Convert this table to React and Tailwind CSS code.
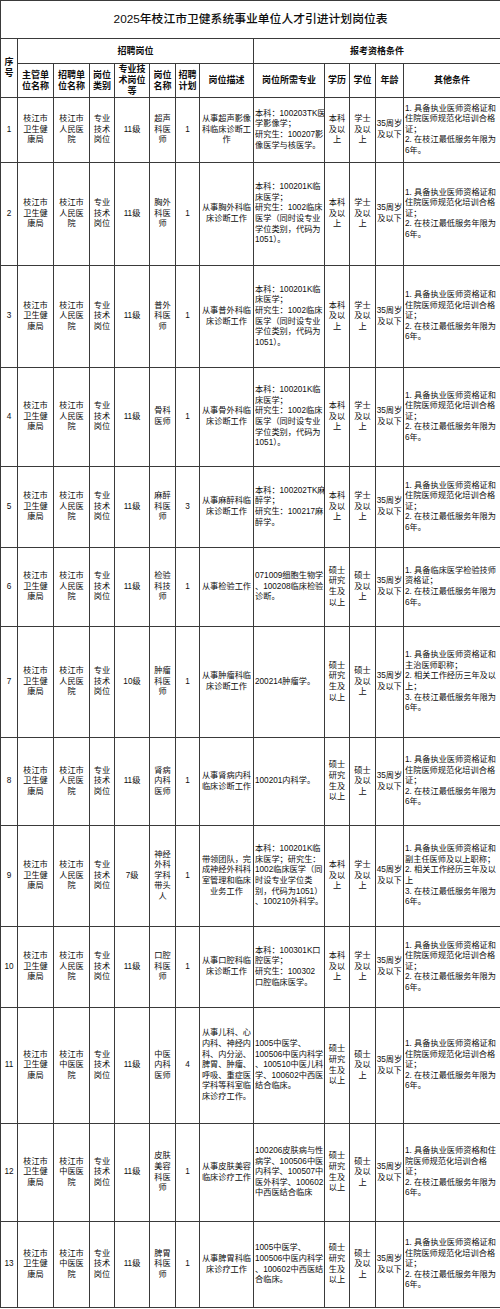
import React from "react";

const A = "枝江市\n卫生健\n康局";
const RM = "枝江市\n人民医\n院";
const ZY = "枝江市\n中医医\n院";
const T = "专业\n技术\n岗位";
const BK = "本科\n及以\n上";
const XS = "学士\n及以\n上";
const SS = "硕士\n研究\n生及\n以上";
const SX = "硕士\n及以\n上";
const AGE = "35周岁\n及以下";
const STD = "1. 具备执业医师资格证和\n住院医师规范化培训合格\n证；\n2. 在枝江最低服务年限为\n6年。";
const LC = "本科：100201K临\n床医学；\n研究生：1002临床\n医学（同时设专业\n学位类别，代码为\n1051）。";

const rows = [
  { h: "h-[65px]", n: "1", b: RM, lv: "11级", name: "超声\n科医\n师", plan: "1", desc: "从事超声影像\n科临床诊断工\n作", major: "本科：100203TK医\n学影像学；\n研究生：100207影\n像医学与核医学。", edu: BK, deg: XS, age: AGE, other: STD },
  { h: "h-[103px]", n: "2", b: RM, lv: "11级", name: "胸外\n科医\n师", plan: "1", desc: "从事胸外科临\n床诊断工作", major: LC, edu: BK, deg: XS, age: AGE, other: STD },
  { h: "h-[102px]", n: "3", b: RM, lv: "11级", name: "普外\n科医\n师", plan: "1", desc: "从事普外科临\n床诊断工作", major: LC, edu: BK, deg: XS, age: AGE, other: STD },
  { h: "h-[99px]", n: "4", b: RM, lv: "11级", name: "骨科\n医师", plan: "1", desc: "从事骨外科临\n床诊断工作", major: LC, edu: BK, deg: XS, age: AGE, other: STD },
  { h: "h-[81px]", n: "5", b: RM, lv: "11级", name: "麻醉\n科医\n师", plan: "3", desc: "从事麻醉科临\n床诊断工作", major: "本科：100202TK麻\n醉学；\n研究生：100217麻\n醉学。", edu: BK, deg: XS, age: AGE, other: STD },
  { h: "h-[79px]", n: "6", b: RM, lv: "11级", name: "检验\n科技\n师", plan: "1", desc: "从事检验工作", major: "071009细胞生物学\n、100208临床检验\n诊断。", edu: SS, deg: SX, age: AGE, other: "1. 具备临床医学检验技师\n资格证；\n2. 在枝江最低服务年限为\n6年。" },
  { h: "h-[111px]", n: "7", b: RM, lv: "10级", name: "肿瘤\n科医\n师", plan: "1", desc: "从事肿瘤科临\n床诊断工作", major: "200214肿瘤学。", edu: SS, deg: SX, age: AGE, other: "1. 具备执业医师资格证和\n主治医师职称；\n2. 相关工作经历三年及以\n上；\n3. 在枝江最低服务年限为\n6年。" },
  { h: "h-[88px]", n: "8", b: RM, lv: "11级", name: "肾病\n内科\n医师", plan: "1", desc: "从事肾病内科\n临床诊断工作", major: "100201内科学。", edu: SS, deg: SX, age: AGE, other: STD },
  { h: "h-[101px]", n: "9", b: RM, lv: "7级", name: "神经\n外科\n学科\n带头\n人", plan: "1", desc: "带领团队，完\n成神经外科科\n室管理和临床\n业务工作", major: "本科：100201K临\n床医学；研究生：\n1002临床医学（同\n时设专业学位类\n别，代码为1051）\n、100210外科学。", edu: BK, deg: XS, age: "45周岁\n及以下", other: "1. 具备执业医师资格证和\n副主任医师及以上职称；\n2. 相关工作经历三年及以\n上\n3. 在枝江最低服务年限为\n6年。" },
  { h: "h-[81px]", n: "10", b: RM, lv: "11级", name: "口腔\n科医\n师", plan: "1", desc: "从事口腔科临\n床诊断工作", major: "本科：100301K口\n腔医学；\n研究生：100302\n口腔临床医学。", edu: BK, deg: XS, age: AGE, other: STD },
  { h: "h-[116px]", n: "11", b: ZY, lv: "11级", name: "中医\n内科\n医师", plan: "4", desc: "从事儿科、心\n内科、神经内\n科、内分泌、\n脾胃、肿瘤、\n呼吸、重症医\n学科等科室临\n床诊疗工作。", major: "1005中医学、\n100506中医内科学\n、100510中医儿科\n学、100602中西医\n结合临床。", edu: SS, deg: SX, age: AGE, other: STD },
  { h: "h-[98px]", n: "12", b: ZY, lv: "11级", name: "皮肤\n美容\n科医\n师", plan: "1", desc: "从事皮肤美容\n临床诊疗工作", major: "100206皮肤病与性\n病学、100506中医\n内科学、100507中\n医外科学、100602\n中西医结合临床", edu: SS, deg: SX, age: AGE, other: "1. 具备执业医师资格和住\n院医师规范化培训合格\n证；\n2. 在枝江最低服务年限为\n6年。" },
  { h: "h-[86px]", n: "13", b: ZY, lv: "11级", name: "脾胃\n科医\n师", plan: "1", desc: "从事脾胃科临\n床诊疗工作", major: "1005中医学、\n100506中医内科学\n、100602中西医结\n合临床。", edu: SS, deg: SX, age: AGE, other: STD },
];

const td = "border border-[#3a3a3a] align-middle whitespace-pre p-0 overflow-hidden";
const c = td + " text-center";
const l = td + " text-left pl-[1px]";
const th = "border border-[#3a3a3a] align-middle whitespace-pre p-0 text-center font-bold text-[9px] leading-[11px]";

export default function App() {
  return (
    <div className="w-[500px] bg-white text-[#0d0d0d] font-['Liberation_Sans','Noto_Sans_CJK_SC',sans-serif]">
      <table className="w-[500px] table-fixed border-collapse text-[8.2px] leading-[10.6px]">
        <colgroup>
          <col className="w-[17px]" />
          <col className="w-[36px]" />
          <col className="w-[36px]" />
          <col className="w-[25px]" />
          <col className="w-[35px]" />
          <col className="w-[26px]" />
          <col className="w-[24px]" />
          <col className="w-[54px]" />
          <col className="w-[71px]" />
          <col className="w-[25px]" />
          <col className="w-[26px]" />
          <col className="w-[28px]" />
          <col className="w-[97px]" />
        </colgroup>
        <thead>
          <tr className="h-[38px]">
            <th colSpan={13} className="border border-[#3a3a3a] text-center align-middle text-[11.8px] font-medium">
              2025年枝江市卫健系统事业单位人才引进计划岗位表
            </th>
          </tr>
          <tr className="h-[25px]">
            <th rowSpan={2} className={th}>{"序\n号"}</th>
            <th colSpan={7} className={th}>招聘岗位</th>
            <th colSpan={5} className={th}>报考资格条件</th>
          </tr>
          <tr className="h-[34px]">
            <th className={th}>{"主管单\n位名称"}</th>
            <th className={th}>{"招聘单\n位名称"}</th>
            <th className={th}>{"岗位\n类别"}</th>
            <th className={th}>{"专业技\n术岗位\n等"}</th>
            <th className={th}>{"岗位\n名称"}</th>
            <th className={th}>{"招聘\n计划"}</th>
            <th className={th}>岗位描述</th>
            <th className={th}>岗位所需专业</th>
            <th className={th}>学历</th>
            <th className={th}>学位</th>
            <th className={th}>年龄</th>
            <th className={th}>其他条件</th>
          </tr>
        </thead>
        <tbody>
          {rows.map((r) => (
            <tr key={r.n} className={r.h}>
              <td className={c}>{r.n}</td>
              <td className={c}>{A}</td>
              <td className={c}>{r.b}</td>
              <td className={c}>{T}</td>
              <td className={c}>{r.lv}</td>
              <td className={c}>{r.name}</td>
              <td className={c}>{r.plan}</td>
              <td className={c}>{r.desc}</td>
              <td className={l}>{r.major}</td>
              <td className={c}>{r.edu}</td>
              <td className={c}>{r.deg}</td>
              <td className={c}>{r.age}</td>
              <td className={l + " text-[8.2px]"}>{r.other}</td>
            </tr>
          ))}
        </tbody>
      </table>
    </div>
  );
}
